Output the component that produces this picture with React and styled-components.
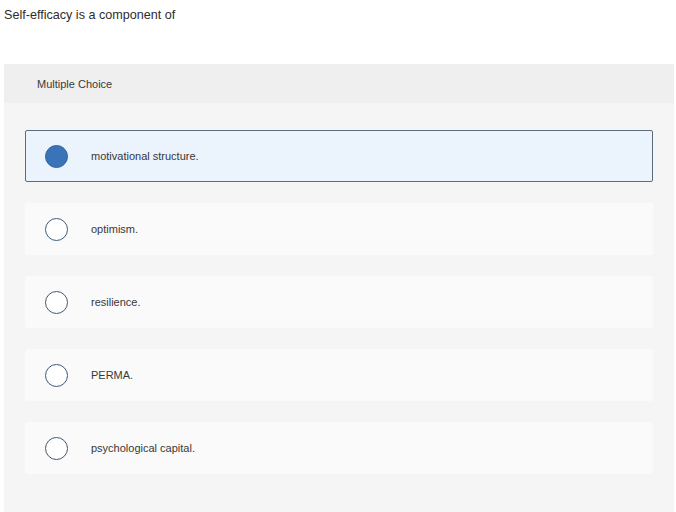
import React, { useState } from 'react'
import styled, { createGlobalStyle } from 'styled-components'

const GlobalStyle = createGlobalStyle`
  body {
    margin: 0;
    background: #ffffff;
    font-family: "Liberation Sans", Arial, sans-serif;
    color: #333;
  }
`

const Page = styled.div`
  width: 676px;
  height: 512px;
  overflow: hidden;
`

const Question = styled.p`
  margin: 0;
  padding: 8px 0 0 4px;
  font-size: 12.6px;
  line-height: 14px;
  color: #2d2d2d;
  height: 56px;
`

const Panel = styled.section`
  margin: 0 2px 0 4px;
  background: #f5f5f5;
  height: 448px;
`

const Header = styled.div`
  height: 39px;
  background: #efefef;
  display: flex;
  align-items: center;
  padding-left: 33px;
  font-size: 11px;
  color: #3a3a3a;
`

const Options = styled.ul`
  list-style: none;
  margin: 0;
  padding: 27px 21px 0 21px;
  display: flex;
  flex-direction: column;
  gap: 21px;
`

const Option = styled.li`
  height: 52px;
  box-sizing: border-box;
  display: flex;
  align-items: center;
  padding-left: 19px;
  background: ${p => (p.$selected ? '#ebf3fd' : '#fafafa')};
  border: 1px solid ${p => (p.$selected ? '#5c6b7e' : '#fafafa')};
  border-radius: 2px;
  cursor: pointer;
`

const Radio = styled.span`
  width: 23px;
  height: 23px;
  box-sizing: border-box;
  border-radius: 50%;
  border: 1.5px solid ${p => (p.$checked ? '#2f65a3' : '#3f5a78')};
  background: ${p => (p.$checked ? '#3a74b8' : '#ffffff')};
  flex-shrink: 0;
`

const Label = styled.span`
  margin-left: 23px;
  font-size: 11px;
  color: #383838;
`

const choices = [
  'motivational structure.',
  'optimism.',
  'resilience.',
  'PERMA.',
  'psychological capital.',
]

const App = () => {
  const [selected, setSelected] = useState(0)

  return (
    <Page>
      <GlobalStyle />
      <Question>Self-efficacy is a component of</Question>
      <Panel>
        <Header>Multiple Choice</Header>
        <Options>
          {choices.map((c, i) => (
            <Option key={i} $selected={selected === i} onClick={() => setSelected(i)}>
              <Radio $checked={selected === i} />
              <Label>{c}</Label>
            </Option>
          ))}
        </Options>
      </Panel>
    </Page>
  )
}

export default App
